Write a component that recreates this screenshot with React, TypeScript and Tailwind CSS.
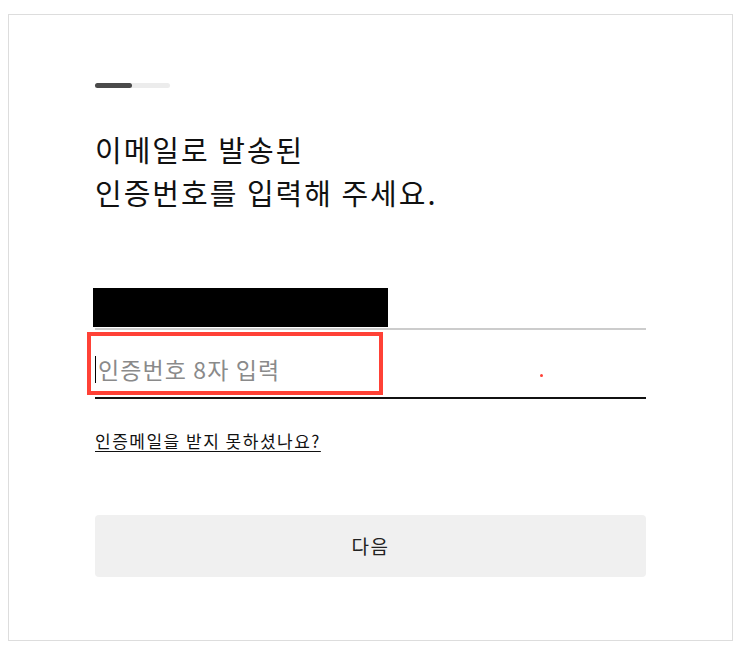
import React from "react";

export default function App() {
  return (
    <div
      className="min-h-screen bg-white pt-[14px] pl-[8px]"
      style={{ fontFamily: '"Noto Sans CJK KR", "Noto Sans", sans-serif' }}
    >
      <div className="w-[725px] h-[627px] border border-[#dddddd] px-[86px] pt-[68px]">
        {/* progress */}
        <div className="w-[75px] h-[5px] rounded-full bg-[#ececec] flex">
          <div className="w-[37px] h-full rounded-full bg-[#4a4a4a]" />
        </div>

        {/* title */}
        <h1 className="mt-[40px] text-[29px] leading-[43px] text-[#111111] font-normal tracking-[2px]">
          이메일로 발송된
          <br />
          인증번호를 입력해 주세요.
        </h1>

        {/* email row (redacted) */}
        <div className="mt-[72px] h-[44px] border-b-2 border-[#cccccc] flex items-end">
          <div className="w-[295px] h-[39px] bg-black ml-[-2px] mb-[1px]" />
        </div>

        {/* code input */}
        <div className="relative h-[69px] border-b-2 border-[#111111] flex items-start pt-[26px]">
          <div className="w-px h-[27px] bg-black" />
          <span className="ml-[2px] mt-[-3px] text-[23px] leading-[32px] text-[#8a8a8a] tracking-[1.1px]">
            인증번호 8자 입력
          </span>
          <div className="absolute left-[-8px] top-[2px] w-[296px] h-[63px] border-4 border-[#ff4136]" />
          <div className="absolute left-[445px] top-[44px] w-[3px] h-[3px] rounded-full bg-[#ff4136]" />
        </div>

        {/* link */}
        <div className="mt-[29px]">
          <a className="text-[17px] leading-[25px] text-[#111111] underline underline-offset-[3px] tracking-[1.5px]">
            인증메일을 받지 못하셨나요?
          </a>
        </div>

        {/* button */}
        <button className="mt-[62px] w-full h-[62px] rounded-[4px] bg-[#f0f0f0] text-[19px] text-[#222222] tracking-[1.5px] flex items-center justify-center">
          다음
        </button>
      </div>
    </div>
  );
}
